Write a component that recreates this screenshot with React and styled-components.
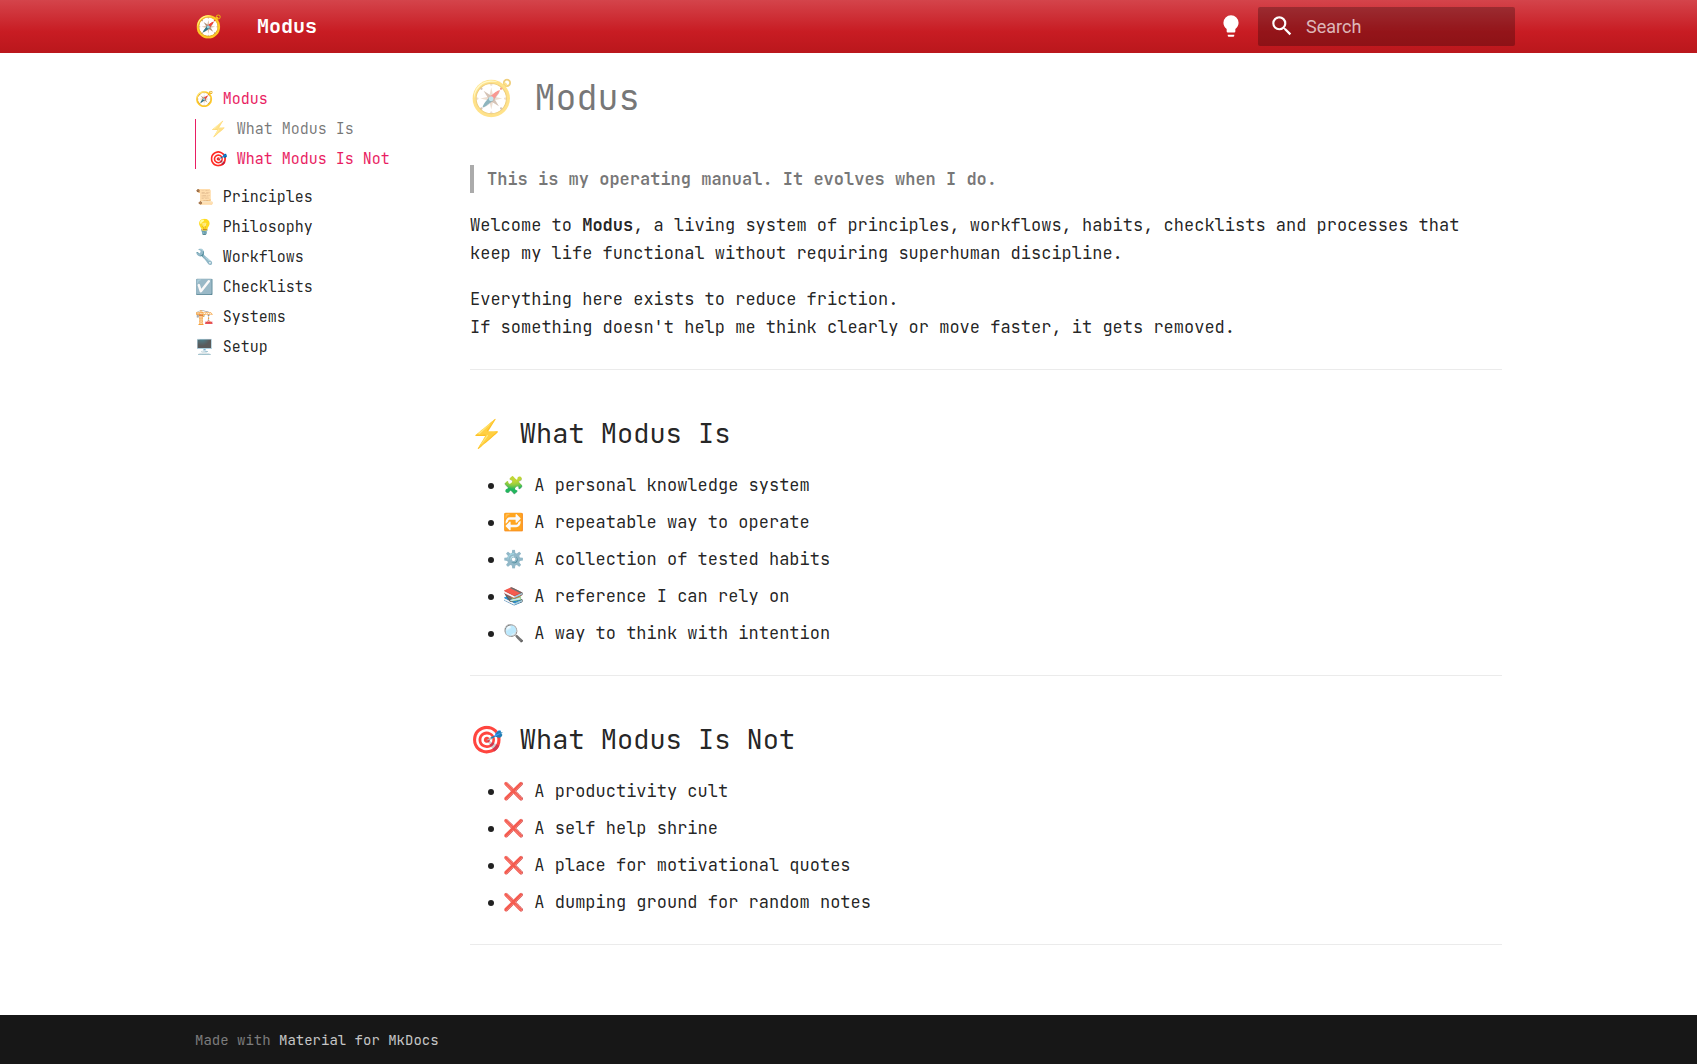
import styled, { createGlobalStyle, css } from "styled-components";

const mono = `"JetBrains Mono", "DejaVu Sans Mono", "Liberation Mono", "Noto Color Emoji", monospace`;

const sections = [
  { icon: "📜", label: "Principles" },
  { icon: "💡", label: "Philosophy" },
  { icon: "🔧", label: "Workflows" },
  { icon: "☑️", label: "Checklists" },
  { icon: "🏗️", label: "Systems" },
  { icon: "🖥️", label: "Setup" },
];

const isList = [
  "🧩 A personal knowledge system",
  "🔁 A repeatable way to operate",
  "⚙️ A collection of tested habits",
  "📚 A reference I can rely on",
  "🔍 A way to think with intention",
];

const isNotList = [
  "❌ A productivity cult",
  "❌ A self help shrine",
  "❌ A place for motivational quotes",
  "❌ A dumping ground for random notes",
];

const App = () => {
  return (
    <Page>
      <GlobalStyle />
      <Header>
        <HeaderInner>
          <Logo href="#" aria-label="Modus">
            🧭
          </Logo>
          <SiteTitle>Modus</SiteTitle>
          <IconButton type="button" aria-label="Switch colour mode">
            <Icon viewBox="0 0 24 24">
              <path d="M12 2a7 7 0 0 0-7 7c0 2.38 1.19 4.47 3 5.74V17a1 1 0 0 0 1 1h6a1 1 0 0 0 1-1v-2.26c1.81-1.27 3-3.36 3-5.74a7 7 0 0 0-7-7M9 21a1 1 0 0 0 1 1h4a1 1 0 0 0 1-1v-1H9z" />
            </Icon>
          </IconButton>
          <Search>
            <Icon viewBox="0 0 24 24">
              <path d="M9.5 3A6.5 6.5 0 0 1 16 9.5c0 1.61-.59 3.09-1.56 4.23l.27.27h.79l5 5-1.5 1.5-5-5v-.79l-.27-.27A6.516 6.516 0 0 1 9.5 16 6.5 6.5 0 0 1 3 9.5 6.5 6.5 0 0 1 9.5 3m0 2C7 5 5 7 5 9.5S7 14 9.5 14 14 12 14 9.5 12 5 9.5 5" />
            </Icon>
            <input type="text" placeholder="Search" aria-label="Search" />
          </Search>
        </HeaderInner>
      </Header>

      <Main>
        <Sidebar>
          <NavLink href="#" $active>
            🧭 Modus
          </NavLink>
          <SubNav>
            <NavLink href="#is" $passed>
              ⚡️ What Modus Is
            </NavLink>
            <NavLink href="#is-not" $active>
              🎯 What Modus Is Not
            </NavLink>
          </SubNav>
          {sections.map(({ icon, label }) => (
            <NavLink href="#" key={label}>
              {icon} {label}
            </NavLink>
          ))}
        </Sidebar>

        <Article>
          <h1>🧭 Modus</h1>
          <blockquote>
            <strong>This is my operating manual. It evolves when I do.</strong>
          </blockquote>
          <p>
            Welcome to <strong>Modus</strong>, a living system of principles,
            workflows, habits, checklists and processes that keep my life
            functional without requiring superhuman discipline.
          </p>
          <p>
            Everything here exists to reduce friction.
            <br />
            If something doesn't help me think clearly or move faster, it gets
            removed.
          </p>
          <hr />
          <h2 id="is">⚡️ What Modus Is</h2>
          <ul>
            {isList.map((item) => (
              <li key={item}>{item}</li>
            ))}
          </ul>
          <hr />
          <h2 id="is-not">🎯 What Modus Is Not</h2>
          <ul>
            {isNotList.map((item) => (
              <li key={item}>{item}</li>
            ))}
          </ul>
          <hr />
        </Article>
      </Main>

      <Footer>
        <FooterInner>
          Made with <a href="#">Material for MkDocs</a>
        </FooterInner>
      </Footer>
    </Page>
  );
};

export default App;

const GlobalStyle = createGlobalStyle`
  * {
    box-sizing: border-box;
  }
  body {
    margin: 0;
    background: #fff;
    color: rgba(0, 0, 0, 0.87);
    font-family: ${mono};
    font-size: 17px;
    line-height: 28px;
    -webkit-font-smoothing: antialiased;
  }
`;

const container = css`
  width: 100%;
  max-width: 1341px;
  margin: 0 auto;
  padding: 0 17px;
`;

const Page = styled.div`
  min-height: 100vh;
  display: flex;
  flex-direction: column;
`;

const Header = styled.header`
  color: #fff;
  background: linear-gradient(#d4444b, #c81c23 60%, #ba171c);
`;

const HeaderInner = styled.div`
  ${container}
  display: flex;
  align-items: center;
  height: 53px;
  padding-right: 4px;
`;

const Logo = styled.a`
  width: 62px;
  color: #000;
  font-size: 22px;
  text-decoration: none;
`;

const SiteTitle = styled.span`
  flex: 1;
  padding-bottom: 2px;
  font-size: 20px;
  font-weight: 700;
`;

const IconButton = styled.button`
  display: flex;
  margin-right: 6px;
  padding: 8px 8px 9px;
  border: 0;
  background: none;
  color: inherit;
  cursor: pointer;
`;

const Icon = styled.svg`
  flex: none;
  width: 26px;
  height: 26px;
  fill: currentColor;
`;

const Search = styled.label`
  display: flex;
  align-items: center;
  gap: 11px;
  width: 257px;
  height: 39px;
  padding: 0 11px 1px;
  border-radius: 2px;
  background: rgba(0, 0, 0, 0.26);

  input {
    flex: 1;
    min-width: 0;
    padding: 0;
    border: 0;
    outline: 0;
    background: none;
    color: #fff;
    font-family: Roboto, sans-serif;
    font-size: 18px;
  }
  input::placeholder {
    color: rgba(255, 255, 255, 0.7);
  }
`;

const Main = styled.div`
  ${container}
  flex: 1;
  display: grid;
  grid-template-columns: 275px minmax(0, 1fr);
`;

const Sidebar = styled.nav`
  display: flex;
  flex-direction: column;
  gap: 10px;
  padding-top: 36px;
`;

const SubNav = styled.div`
  display: flex;
  flex-direction: column;
  gap: 10px;
  margin-bottom: 8px;
  padding-left: 13px;
  border-left: 1px solid #e91e63;
`;

const NavLink = styled.a`
  color: ${({ $active, $passed }) =>
    $active
      ? "#e91e63"
      : $passed
      ? "rgba(0, 0, 0, 0.54)"
      : "rgba(0, 0, 0, 0.87)"};
  font-size: 15px;
  line-height: 20px;
  text-decoration: none;
`;

const Article = styled.article`
  padding: 22px 0 70px;

  h1 {
    margin: 0 0 44px;
    color: rgba(0, 0, 0, 0.54);
    font-size: 35px;
    font-weight: 400;
    line-height: 46px;
  }
  h2 {
    margin: 44px 0 19px;
    font-size: 27px;
    font-weight: 400;
    line-height: 38px;
  }
  blockquote {
    margin: 0;
    padding-left: 13px;
    border-left: 4px solid #ababab;
    color: rgba(0, 0, 0, 0.54);
  }
  p {
    margin: 18px 0;
  }
  hr {
    margin: 28px 0 0;
    border: 0;
    border-bottom: 1px solid #ebebeb;
  }
  ul {
    margin: 0;
    padding-left: 18px;
    list-style: none;
  }
  li {
    display: flex;
    gap: 9px;
  }
  li::before {
    content: "";
    flex: none;
    width: 6px;
    height: 6px;
    margin-top: 12px;
    border-radius: 50%;
    background: currentColor;
  }
  li + li {
    margin-top: 9px;
  }
`;

const Footer = styled.footer`
  background: #171717;
`;

const FooterInner = styled.div`
  ${container}
  padding-top: 15px;
  padding-bottom: 14px;
  color: #7c7c7c;
  font-size: 14px;
  line-height: 20px;

  a {
    color: #c5c5c5;
    text-decoration: none;
  }
`;
